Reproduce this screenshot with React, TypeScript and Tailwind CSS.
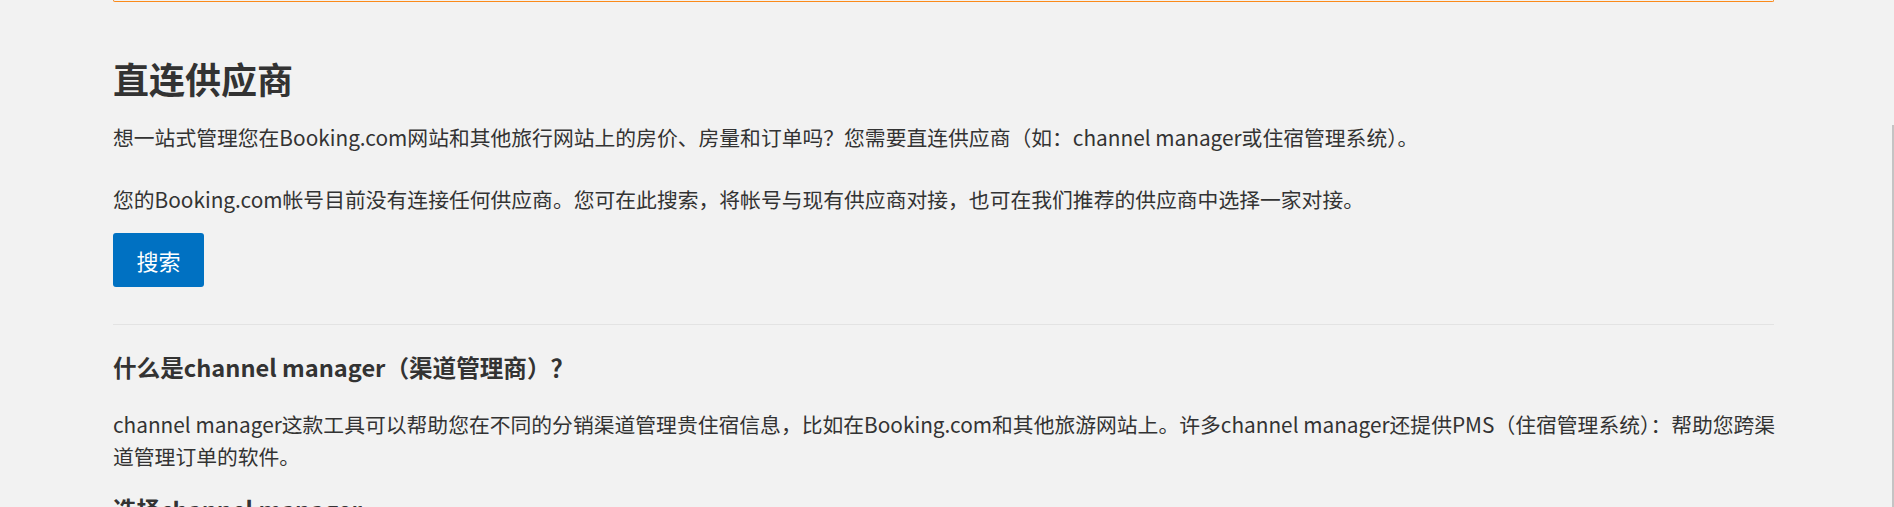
import React from "react";

const FONT = '"Noto Sans CJK SC", "Noto Sans", sans-serif';

export default function App() {
  return (
    <div
      className="relative min-h-[507px] w-full overflow-hidden bg-[#f2f2f2] text-[#333333]"
      style={{ fontFamily: FONT }}
    >
      <div className="ml-[113px] w-[1661px]">
        <div className="h-[2px] rounded-b-[3px] border-x border-b border-[#fb8a1a]" />

        <h1 className="mt-[54px] text-[36px] font-bold leading-[45px]">直连供应商</h1>

        <p className="mt-[21px] text-[20.8px] leading-[30px]">
          想一站式管理您在Booking.com网站和其他旅行网站上的房价、房量和订单吗？您需要直连供应商（如：channel manager或住宿管理系统）。
        </p>

        <p className="mt-[32px] text-[20.8px] leading-[30px]">
          您的Booking.com帐号目前没有连接任何供应商。您可在此搜索，将帐号与现有供应商对接，也可在我们推荐的供应商中选择一家对接。
        </p>

        <button
          type="button"
          className="mt-[19px] flex h-[54px] w-[91px] items-center justify-center rounded-[3px] bg-[#0071c2] text-[22px] text-white"
        >
          搜索
        </button>

        <div className="mt-[37px] h-px w-full bg-[#e3e3e3]" />

        <h3 className="mt-[26px] text-[23.6px] font-bold leading-[33px]">
          什么是channel manager（渠道管理商）？
        </h3>

        <p className="-mr-[10px] mt-[24px] text-[20.8px] leading-[32px]">
          channel manager这款工具可以帮助您在不同的分销渠道管理贵住宿信息，比如在Booking.com和其他旅游网站上。许多channel manager还提供PMS（住宿管理系统）：帮助您跨渠道管理订单的软件。
        </p>

        <h3 className="mt-[21px] text-[23.6px] font-bold leading-[33px]">选择channel manager</h3>
      </div>

      <div className="absolute bottom-0 right-0 top-[125px] w-[2px] bg-[#c4c4c4]" />
    </div>
  );
}
